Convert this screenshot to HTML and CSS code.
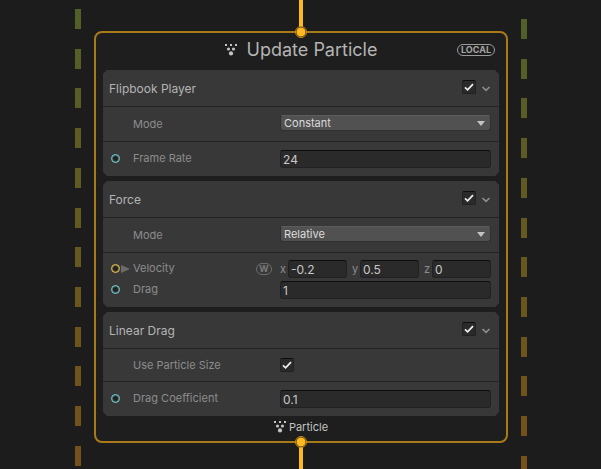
FILE: index.html
```html
<!DOCTYPE html>
<html lang="en">
<head>
<meta charset="utf-8">
<meta name="viewport" content="width=device-width, initial-scale=1">
<title>Update Particle</title>
<link rel="stylesheet" href="styles.css">
</head>
<body>
<svg class="defs" aria-hidden="true">
  <symbol id="particles" viewBox="0 0 12 12">
    <path d="M0 0h2v2H0zM5 0h2v2H5zM10 0h2v2h-2z"/>
    <circle cx="3.5" cy="5" r="1.6"/><circle cx="8.5" cy="5" r="1.6"/><circle cx="6" cy="9.4" r="2.1"/>
  </symbol>
  <symbol id="tick" viewBox="0 0 14 14"><path d="M3 7.4 5.6 9.8 11 4.2" fill="none" stroke="#ececec" stroke-width="1.8"/></symbol>
  <symbol id="chevron" viewBox="0 0 10 6"><path d="M1.5 1 5 4.4 8.5 1" fill="none" stroke="#8c8c8c" stroke-width="1.7"/></symbol>
  <symbol id="drop" viewBox="0 0 8 5"><path d="M0 0h8L4 5z" fill="#c4c4c4"/></symbol>
</svg>
<div class="canvas">
  <div class="rail rail-left"><i></i><i></i><i></i><i></i><i></i><i></i><i></i><i></i><i></i><i></i><i></i><i></i></div>
  <main class="flow">
    <div class="wire wire-in"></div>
    <section class="node">
      <span class="anchor anchor-in"></span>
      <header class="node-head">
        <div class="title">
          <svg class="particles"><use href="#particles"/></svg>
          <h1>Update Particle</h1>
        </div>
        <span class="space">LOCAL</span>
      </header>

      <div class="blocks">
        <section class="block">
          <header class="block-head">
            <h2>Flipbook Player</h2>
            <span class="check"><input type="checkbox" checked aria-label="Enable Flipbook Player"><svg><use href="#tick"/></svg></span>
            <button class="fold" aria-label="Collapse Flipbook Player"><svg><use href="#chevron"/></svg></button>
          </header>
          <div class="group">
            <div class="row row-pick">
              <label for="flip-mode">Mode</label>
              <span class="pick"><select id="flip-mode"><option>Constant</option></select><svg><use href="#drop"/></svg></span>
            </div>
          </div>
          <div class="group">
            <div class="row">
              <span class="port"></span>
              <label for="rate">Frame Rate</label>
              <input class="field" id="rate" type="text" value="24">
            </div>
          </div>
        </section>

        <section class="block">
          <header class="block-head">
            <h2>Force</h2>
            <span class="check"><input type="checkbox" checked aria-label="Enable Force"><svg><use href="#tick"/></svg></span>
            <button class="fold" aria-label="Collapse Force"><svg><use href="#chevron"/></svg></button>
          </header>
          <div class="group">
            <div class="row row-pick">
              <label for="force-mode">Mode</label>
              <span class="pick"><select id="force-mode"><option>Relative</option></select><svg><use href="#drop"/></svg></span>
            </div>
          </div>
          <div class="group group-tight">
            <div class="row">
              <span class="port port-vector"></span>
              <button class="expand" aria-label="Expand Velocity"><svg viewBox="0 0 9 8"><path d="M0 0 9 4 0 8z" fill="#6b6b6b"/></svg></button>
              <label for="vel-x">Velocity</label>
              <span class="world">W</span>
              <div class="vector">
                <label for="vel-x">x</label><input class="field" id="vel-x" type="text" value="-0.2">
                <label for="vel-y">y</label><input class="field" id="vel-y" type="text" value="0.5">
                <label for="vel-z">z</label><input class="field" id="vel-z" type="text" value="0">
              </div>
            </div>
            <div class="row">
              <span class="port"></span>
              <label for="drag">Drag</label>
              <input class="field" id="drag" type="text" value="1">
            </div>
          </div>
        </section>

        <section class="block">
          <header class="block-head">
            <h2>Linear Drag</h2>
            <span class="check"><input type="checkbox" checked aria-label="Enable Linear Drag"><svg><use href="#tick"/></svg></span>
            <button class="fold" aria-label="Collapse Linear Drag"><svg><use href="#chevron"/></svg></button>
          </header>
          <div class="group">
            <div class="row row-pick">
              <label for="use-size">Use Particle Size</label>
              <span class="check"><input id="use-size" type="checkbox" checked><svg><use href="#tick"/></svg></span>
            </div>
          </div>
          <div class="group">
            <div class="row">
              <span class="port"></span>
              <label for="coef">Drag Coefficient</label>
              <input class="field" id="coef" type="text" value="0.1">
            </div>
          </div>
        </section>
      </div>

      <footer class="node-foot"><svg class="particles"><use href="#particles"/></svg><span>Particle</span></footer>
      <span class="anchor anchor-out"></span>
    </section>
    <div class="wire wire-out"></div>
  </main>
  <div class="rail rail-right"><i></i><i></i><i></i><i></i><i></i><i></i><i></i><i></i><i></i><i></i><i></i><i></i></div>
</div>
</body>
</html>
```
FILE: styles.css
```css
* { box-sizing: border-box; }

body {
  margin: 0;
  background: #1c1c1c;
  color: #b4b4b4;
  font: 12px/16px Inter, "Liberation Sans", sans-serif;
}

svg { display: block; }
.defs { display: none; }
h1, h2 { margin: 0; font-weight: 400; }
button { padding: 0; border: 0; background: none; }

.canvas {
  display: flex;
  gap: 13px;
  min-height: 100vh;
  padding: 0 74px 0 75px;
  overflow: hidden;
}

/* dashed sides of the enclosing system */
.rail {
  display: flex;
  flex: none;
  flex-direction: column;
  justify-content: space-between;
  width: 6px;
}
.rail-left { padding: 9px 0 3px; }
.rail-right { padding-top: 19px; margin-bottom: -7px; }
.rail i {
  height: 20px;
  background: linear-gradient(#50602a, #64591f 50%, #76501a) fixed;
}

.flow {
  display: flex;
  flex: 1;
  flex-direction: column;
  align-items: stretch;
  min-width: 0;
}
.wire {
  align-self: center;
  width: 4px;
  background: #ffb81f;
}
.wire-in { height: 31px; }
.wire-out { flex: 1; min-height: 26px; }

.node {
  position: relative;
  padding: 0 7px;
  border: 2px solid #a97b18;
  border-radius: 8px;
  background: #1e1e1e;
}
.anchor {
  position: absolute;
  left: 50%;
  width: 12px;
  height: 12px;
  margin-left: -6px;
  border: 1px solid #c28d1c;
  border-radius: 50%;
  background: radial-gradient(circle, #ffb81f 4px, #3a2c10 5px);
}
.anchor-in { top: -7px; }
.anchor-out { bottom: -7px; }

.node-head {
  display: grid;
  grid-template-columns: 1fr auto 1fr;
  align-items: center;
  height: 37px;
  padding: 0 4px 4px;
}
.title {
  display: flex;
  grid-column: 2;
  align-items: center;
  gap: 10px;
}
.title h1 { font-size: 18px; line-height: 24px; }
.particles {
  width: 12px;
  height: 12px;
  fill: #c4c4c4;
}
.space {
  justify-self: end;
  padding: 0 3px;
  border: 1px solid #9a9a9a;
  border-radius: 6px;
  color: #a4a4a4;
  font: 700 9px/10px Inter, sans-serif;
}

.blocks {
  display: flex;
  flex-direction: column;
  gap: 5px;
}
.block {
  background: #383838;
  clip-path: polygon(4px 0, calc(100% - 4px) 0, 100% 4px, 100% calc(100% - 4px), calc(100% - 4px) 100%, 4px 100%, 0 calc(100% - 4px), 0 4px);
}
.block-head {
  display: flex;
  align-items: center;
  height: 36px;
  padding: 0 8px 2px 6px;
}
.block-head h2 { flex: 1; padding-top: 4px; font-size: 12px; }
.fold { margin: 4px 0 0 5px; }
.fold svg { width: 10px; height: 6px; }

.check {
  display: grid;
  width: 14px;
  height: 14px;
}
.check > * { grid-area: 1 / 1; width: 14px; height: 14px; }
.check svg { pointer-events: none; }
.check input {
  appearance: none;
  margin: 0;
  border: 1px solid #212121;
  border-top-color: #0d0d0d;
  border-radius: 2px;
  background: #2a2a2a;
}
.check input:not(:checked) + svg { visibility: hidden; }

.group {
  display: flex;
  flex-direction: column;
  gap: 3px;
  padding: 8px;
  border-top: 1px solid #232323;
}
.group-tight { padding-top: 7px; }
.row {
  display: grid;
  grid-template-columns: 10px 12px 123px 24px 1fr;
  align-items: center;
}
.row > * { grid-row: 1; }
.row > label { grid-column: 3 / 5; padding-bottom: 2px; color: #8c8c8c; font-size: 11px; }
.row-pick > label { padding-bottom: 0; }
.row > .field, .row > .pick, .row > .check, .row > .vector { grid-column: 5; }

.port {
  width: 9px;
  height: 9px;
  margin-bottom: 2px;
  border: 1px solid #7fd4d8;
  border-radius: 50%;
  background: #222;
  box-shadow: inset 0 0 0 1px #3f6668;
}
.port-vector { border-color: #f0cc58; box-shadow: inset 0 0 0 1px #6e6030; }
.expand { grid-column: 2; margin-bottom: 1px; }
.expand svg { width: 9px; height: 8px; }
.world {
  grid-column: 4;
  width: 16px;
  border: 1px solid #6b6b6b;
  border-radius: 6px;
  color: #7a7a7a;
  font: 700 9px/10px Inter, sans-serif;
  text-align: center;
}

.field {
  width: 100%;
  min-width: 0;
  height: 18px;
  padding: 1px 2px 0;
  border: 1px solid #212121;
  border-top-color: #0d0d0d;
  border-radius: 3px;
  background: #2a2a2a;
  color: #c8c8c8;
  font: 12px/16px Inter, sans-serif;
}
.vector {
  display: grid;
  grid-template-columns: 8px 1fr 13px 1fr 13px 1fr;
  align-items: center;
}
.vector label { color: #8c8c8c; font-size: 11px; }
.vector label + .field + label { padding-left: 5px; }

.pick {
  display: grid;
  align-items: center;
  height: 18px;
  padding-bottom: 2px;
}
.pick > * { grid-area: 1 / 1; }
.pick select {
  appearance: none;
  height: 16px;
  padding: 0 3px;
  border: 1px solid #303030;
  border-top-color: #5c5c5c;
  border-radius: 3px;
  background: #515151;
  color: #dcdcdc;
  font: 11px/14px Inter, sans-serif;
}
.pick svg {
  justify-self: end;
  width: 8px;
  height: 5px;
  margin-right: 6px;
  pointer-events: none;
}

.node-foot {
  display: flex;
  align-items: center;
  justify-content: center;
  gap: 3px;
  height: 25px;
  padding-bottom: 3px;
  color: #c4c4c4;
  font-size: 11px;
}
```
